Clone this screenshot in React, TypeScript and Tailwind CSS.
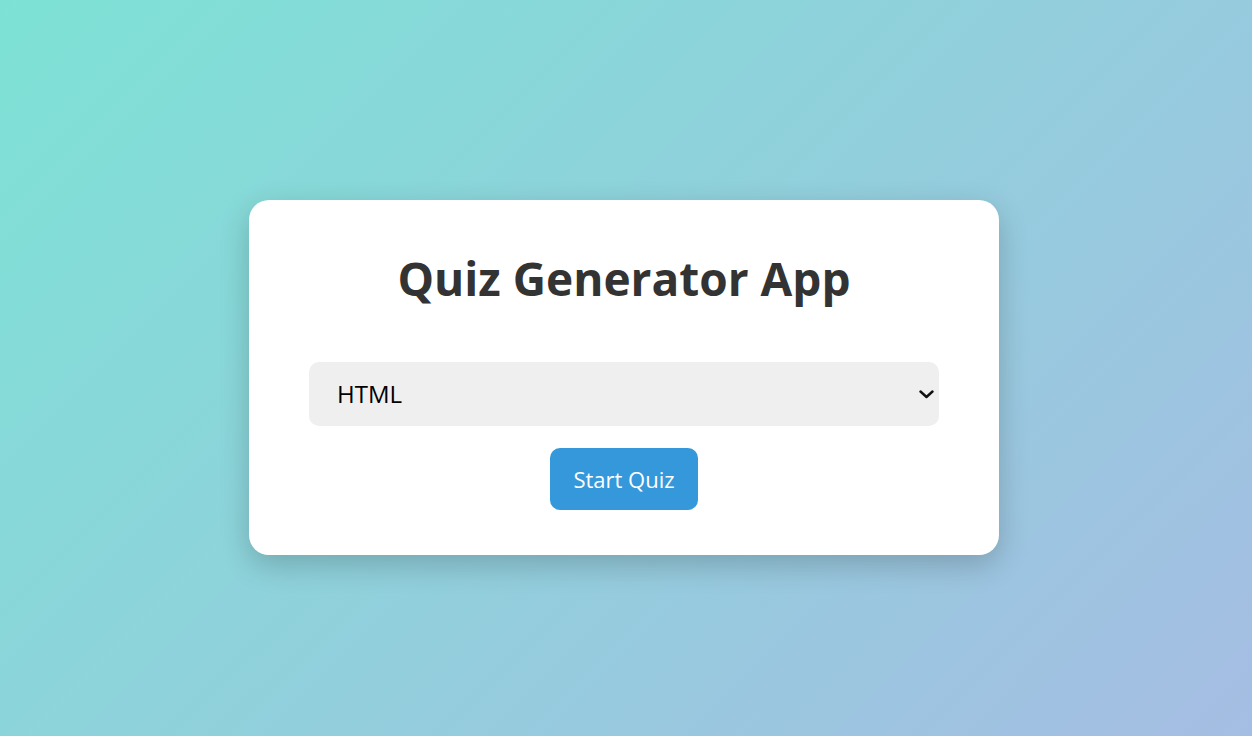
import React from 'react';

export default function App() {
  const [topic, setTopic] = React.useState('HTML');

  return (
    <div className="flex min-h-screen w-full justify-center bg-[linear-gradient(135deg,#7de2d5,#a5bde3)] pt-[200px] pr-[4px] font-['Open_Sans','Noto_Sans',sans-serif]">
      <div className="flex h-fit w-[750px] flex-col items-center rounded-[20px] bg-white px-[60px] pt-[46px] pb-[45px] shadow-[0_10px_30px_rgba(0,0,0,0.2)]">
        <h1 className="text-[46px] font-bold leading-[64px] text-[#333]">Quiz Generator App</h1>

        {/* Topic picker */}
        <div className="relative mt-[52px] w-full">
          <select
            value={topic}
            onChange={(e) => setTopic(e.target.value)}
            className="h-[64px] w-full appearance-none rounded-[10px] bg-[#efefef] pl-[28px] pr-[40px] text-[24px] text-black outline-none"
          >
            <option>HTML</option>
            <option>CSS</option>
            <option>JavaScript</option>
          </select>
          <svg
            className="pointer-events-none absolute right-[5px] top-[28px]"
            width="15"
            height="9"
            viewBox="0 0 15 9"
            fill="none"
          >
            <path d="M1.5 1.5 L7.5 7 L13.5 1.5" stroke="#111" strokeWidth="2.4" strokeLinecap="round" strokeLinejoin="round" />
          </svg>
        </div>

        <button className="mt-[22px] h-[62px] w-[148px] rounded-[10px] bg-[#3498db] text-[22px] text-white">
          Start Quiz
        </button>
      </div>
    </div>
  );
}
